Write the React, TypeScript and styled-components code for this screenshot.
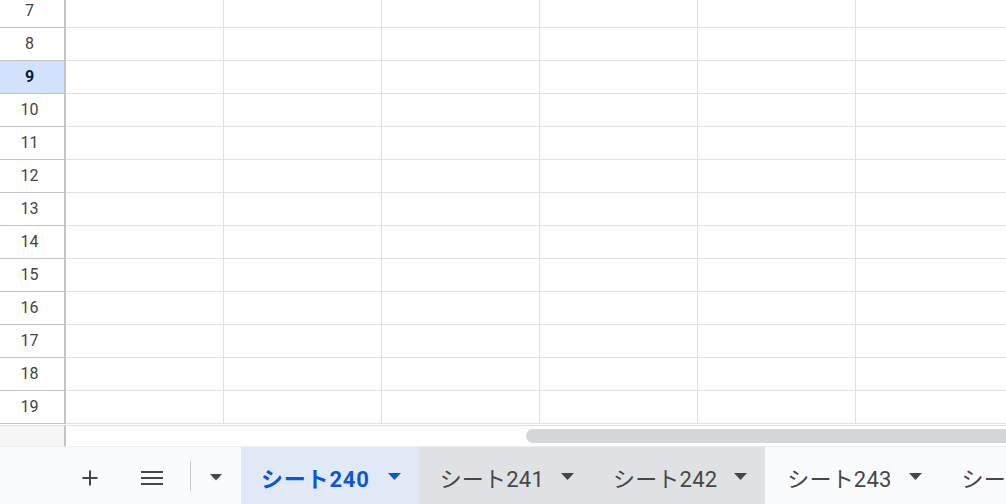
import React from "react";
import styled, { createGlobalStyle } from "styled-components";

const Global = createGlobalStyle`
  html, body { margin: 0; padding: 0; background: #fff; overflow: hidden; }
  body { font-family: Roboto, "Noto Sans CJK JP", Arial, sans-serif; }
`;

const Page = styled.div`
  width: 1006px;
  height: 504px;
  display: flex;
  flex-direction: column;
  overflow: hidden;
  background: #fff;
`;

const GridViewport = styled.div`
  height: 424px;
  overflow: hidden;
  flex: none;
`;

const GridInner = styled.div`
  margin-top: -5px;
  display: flex;
  flex-direction: column;
`;

const Row = styled.div`
  display: flex;
  height: 33px;
  flex: none;
`;

const RowHeader = styled.div<{ $selected?: boolean }>`
  width: 66px;
  flex: none;
  box-sizing: border-box;
  border-right: 2px solid #c4c4c4;
  border-bottom: 1px solid #c4c4c4;
  background: ${(p) => (p.$selected ? "#d3e3fd" : "#fff")};
  color: ${(p) => (p.$selected ? "#041e49" : "#444")};
  font-family: Roboto, Arial, sans-serif;
  font-size: 16px;
  font-weight: ${(p) => (p.$selected ? 700 : 400)};
  display: flex;
  align-items: center;
  justify-content: center;
  padding-right: 5px;
  padding-bottom: 1px;
`;

const Cell = styled.div`
  width: 158px;
  flex: none;
  box-sizing: border-box;
  border-right: 1px solid #e1e1e1;
  border-bottom: 1px solid #e1e1e1;
`;

const ScrollStrip = styled.div`
  margin-top: 1px;
  height: 21px;
  flex: none;
  box-sizing: border-box;
  border-top: 1px solid #e1e1e1;
  display: flex;
`;

const Gutter = styled.div`
  width: 66px;
  flex: none;
  box-sizing: border-box;
  background: #f6f6f6;
  border-right: 2px solid #c4c4c4;
`;

const Track = styled.div`
  flex: 1;
  display: flex;
  align-items: center;
  padding-left: 460px;
  padding-bottom: 1px;
`;

const Thumb = styled.div`
  flex: 1;
  height: 14px;
  border-radius: 7px 0 0 7px;
  background: #d5d6d9;
`;

const TabBar = styled.div`
  height: 58px;
  flex: none;
  background: #f9fbfd;
  display: flex;
  align-items: stretch;
  padding-left: 70px;
  box-sizing: border-box;
  border-top: 1px solid #eceef1;
`;

const IconButton = styled.div<{ $w: number; $ml: number }>`
  width: ${(p) => p.$w}px;
  margin-left: ${(p) => p.$ml}px;
  flex: none;
  display: flex;
  align-items: center;
  justify-content: center;
  color: #444746;
  padding-top: 4px;
`;

const Divider = styled.div`
  width: 1px;
  margin-left: 18px;
  margin-top: 14px;
  height: 30px;
  background: #c4c7c5;
  flex: none;
`;

const TabSpacer = styled.div`
  width: 9px;
  flex: none;
`;

const Tab = styled.div<{ $active?: boolean; $hover?: boolean; $pl: number }>`
  flex: none;
  display: flex;
  align-items: center;
  gap: ${(p) => (p.$active ? 18 : 17)}px;
  padding: 2px 18px 0 ${(p) => p.$pl}px;
  background: ${(p) =>
    p.$active ? "#e1e9f7" : p.$hover ? "#dfe1e4" : "transparent"};
  color: ${(p) => (p.$active ? "#0b57d0" : "#444746")};
  font-family: Roboto, "Noto Sans CJK JP", sans-serif;
  font-size: 22px;
  letter-spacing: ${(p) => (p.$active ? "0.8px" : "0.2px")};
  font-weight: ${(p) => (p.$active ? 700 : 400)};
  white-space: nowrap;
`;

const Plus = () => (
  <svg width="18" height="18" viewBox="0 0 18 18">
    <path d="M9 1.5v15M1.5 9h15" stroke="currentColor" strokeWidth="2" fill="none" />
  </svg>
);

const Menu = () => (
  <svg width="24" height="16" viewBox="0 0 24 16">
    <path d="M1 2h22M1 8h22M1 14h22" stroke="currentColor" strokeWidth="2.2" fill="none" />
  </svg>
);

const Caret = ({ size = 13 }: { size?: number }) => (
  <svg width={size} height={size / 2 + 0.5} viewBox="0 0 13 7">
    <path d="M0 0h13L6.5 7z" fill="currentColor" />
  </svg>
);

const rows = [7, 8, 9, 10, 11, 12, 13, 14, 15, 16, 17, 18, 19];
const cols = [0, 1, 2, 3, 4, 5];

const tabs = [
  { name: "シート240", active: true, pl: 20 },
  { name: "シート241", hover: true, pl: 21 },
  { name: "シート242", hover: true, pl: 21 },
  { name: "シート243", pl: 22 },
  { name: "シート244", pl: 22 },
];

export default function App() {
  return (
    <Page>
      <Global />
      <GridViewport>
        <GridInner>
          {rows.map((r) => (
            <Row key={r}>
              <RowHeader $selected={r === 9}>{r}</RowHeader>
              {cols.map((c) => (
                <Cell key={c} />
              ))}
            </Row>
          ))}
        </GridInner>
      </GridViewport>
      <ScrollStrip>
        <Gutter />
        <Track>
          <Thumb />
        </Track>
      </ScrollStrip>
      <TabBar>
        <IconButton $w={40} $ml={0}>
          <Plus />
        </IconButton>
        <IconButton $w={40} $ml={22}>
          <Menu />
        </IconButton>
        <Divider />
        <IconButton $w={32} $ml={9}>
          <Caret size={12} />
        </IconButton>
        <TabSpacer />
        {tabs.map((t) => (
          <Tab key={t.name} $active={t.active} $hover={t.hover} $pl={t.pl}>
            <span>{t.name}</span>
            <Caret />
          </Tab>
        ))}
      </TabBar>
    </Page>
  );
}
